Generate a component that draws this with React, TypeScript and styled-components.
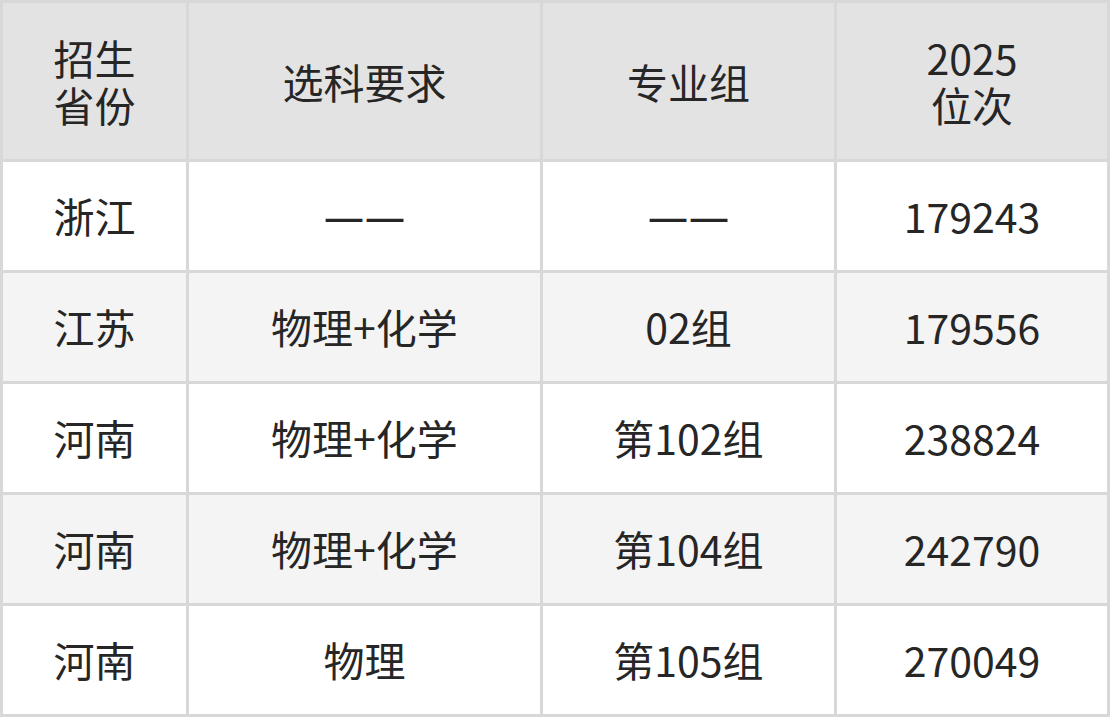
import React from 'react';
import styled, {createGlobalStyle} from "styled-components";

const GlobalStyle = createGlobalStyle`
  html, body {
    margin: 0;
    padding: 0;
    background: #ffffff;
  }
  body {
    font-family: "Noto Sans CJK SC", "Noto Sans", sans-serif;
  }
`

type Row = {
    province: string
    subjects: string
    group: string
    rank: string
}

const rows: Row[] = [
    {province: "浙江", subjects: "——", group: "——", rank: "179243"},
    {province: "江苏", subjects: "物理+化学", group: "02组", rank: "179556"},
    {province: "河南", subjects: "物理+化学", group: "第102组", rank: "238824"},
    {province: "河南", subjects: "物理+化学", group: "第104组", rank: "242790"},
    {province: "河南", subjects: "物理", group: "第105组", rank: "270049"},
]

const show = (text: string) => text === "——" ? <Dash>{text}</Dash> : text

export default function App() {
    return (
        <>
            <GlobalStyle/>
            <Table>
                <HeadCell>招生<br/>省份</HeadCell>
                <HeadCell>选科要求</HeadCell>
                <HeadCell>专业组</HeadCell>
                <HeadCell>2025<br/>位次</HeadCell>
                {rows.map((r, i) => (
                    <React.Fragment key={i}>
                        <Cell striped={i % 2 === 1}>{r.province}</Cell>
                        <Cell striped={i % 2 === 1}>{show(r.subjects)}</Cell>
                        <Cell striped={i % 2 === 1}>{show(r.group)}</Cell>
                        <Cell striped={i % 2 === 1}>{r.rank}</Cell>
                    </React.Fragment>
                ))}
            </Table>
        </>
    );
}

const Table = styled.div`
  display: grid;
  grid-template-columns: 183px 351px 291px 270px;
  grid-template-rows: 156px repeat(5, 108px);
  gap: 3px;
  padding: 3px;
  width: 1110px;
  box-sizing: border-box;
  background: #d8d8d8;
  color: #262626;
  font-size: 41px;
`

const HeadCell = styled.div`
  display: flex;
  align-items: center;
  justify-content: center;
  text-align: center;
  line-height: 47px;
  background: #e3e3e3;
`

const Cell = styled.div<{ striped: boolean }>`
  display: flex;
  align-items: center;
  justify-content: center;
  text-align: center;
  line-height: 1.2;
  background: ${p => p.striped ? "#f4f4f4" : "#ffffff"};
`

const Dash = styled.span`
  font-family: "Noto Sans", sans-serif;
  font-size: 40px;
  letter-spacing: 1px;
  margin-right: -1px;
`
